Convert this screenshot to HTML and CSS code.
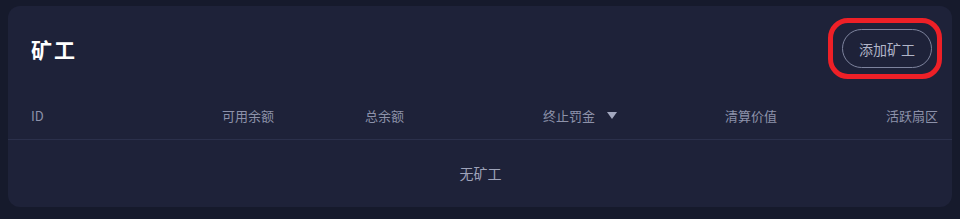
FILE: index.html
```html
<!DOCTYPE html>
<html lang="zh-CN">
<head>
  <meta charset="UTF-8" />
  <meta name="viewport" content="width=device-width, initial-scale=1.0"/>
  <title>矿工</title>
  <link rel="stylesheet" href="styles.css">
</head>
<body>
  <!-- 矿工列表 -->
  <div class="card">
    <div class="card-head">
      <h2>矿工</h2>
      <span class="mark">
        <button class="add-button">添加矿工</button>
      </span>
    </div>

    <div class="table-head">
      <div>ID</div>
      <div>可用余额</div>
      <div>总余额</div>
      <div class="sortable">终止罚金 <span class="caret"></span></div>
      <div>清算价值</div>
      <div>活跃扇区</div>
    </div>

    <div class="empty">无矿工</div>
  </div>
</body>
</html>
```

FILE: styles.css
```css
* {
  margin: 0;
  padding: 0;
  box-sizing: border-box;
}

html, body {
  width: 100%;
  height: 100%;
  background: #161a2c;
  font-family: 'Noto Sans CJK SC', 'Noto Sans', sans-serif;
  overflow: hidden;
}

body {
  padding: 6px 8px;
}

.card {
  background: #1e2239;
  border-radius: 12px;
  height: 201px;
  padding: 23px 22px 0 23px;
}

.card-head {
  display: flex;
  justify-content: space-between;
  align-items: center;
  height: 39px;
}

.card-head h2 {
  font-size: 21px;
  font-weight: 700;
  color: #ffffff;
  letter-spacing: 2px;
}

.mark {
  position: relative;
  margin-right: -2px;
}

.mark::after {
  content: "";
  position: absolute;
  top: -11px;
  bottom: -11px;
  left: -14px;
  right: -10px;
  border: 5px solid #ee2027;
  border-radius: 20px;
  pointer-events: none;
}

.add-button {
  display: block;
  width: 90px;
  height: 39px;
  background: transparent;
  border: 1px solid #7d839d;
  border-radius: 20px;
  color: #b1b5c8;
  font-family: inherit;
  font-size: 14px;
  cursor: pointer;
}

.table-head {
  display: grid;
  grid-template-columns: 191px 143px 178px 182px 161px 52px;
  align-items: center;
  height: 49px;
  margin-top: 23px;
  margin-left: -23px;
  margin-right: -22px;
  padding-left: 23px;
  padding-right: 22px;
  border-bottom: 1px solid #2b304b;
  font-size: 13px;
  color: #8d92aa;
  white-space: nowrap;
}

.sortable {
  display: flex;
  align-items: center;
  gap: 12px;
}

.caret {
  width: 0;
  height: 0;
  border-left: 5px solid transparent;
  border-right: 5px solid transparent;
  border-top: 7px solid #a3a8bf;
}

.empty {
  height: 66px;
  display: flex;
  justify-content: center;
  align-items: center;
  font-size: 14px;
  color: #9ea3b9;
}
```
